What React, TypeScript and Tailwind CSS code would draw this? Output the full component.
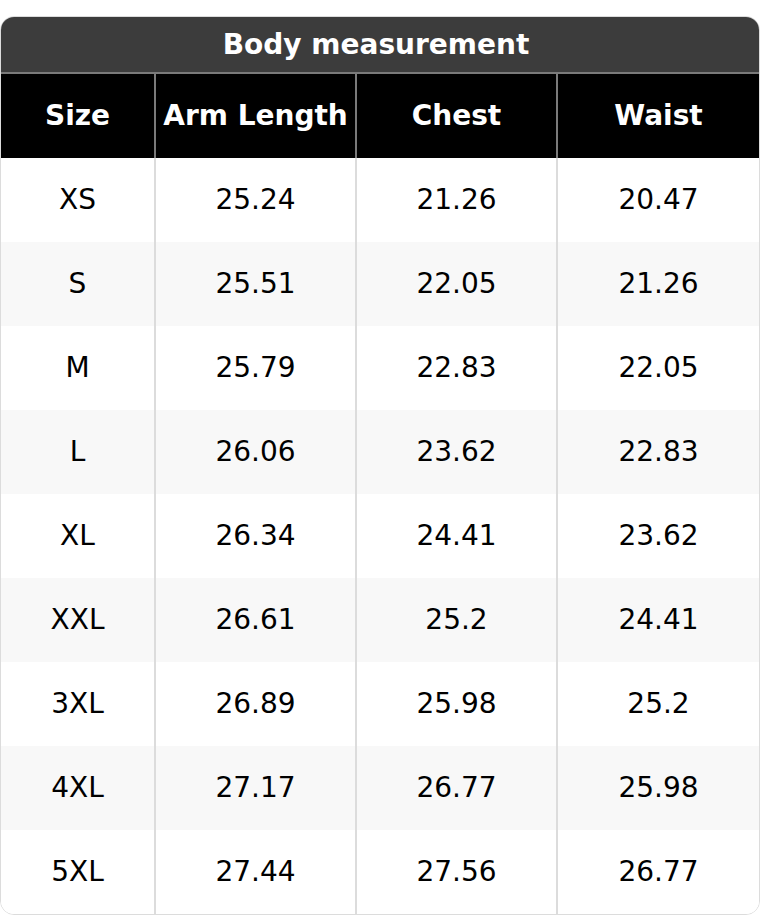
const HEADERS = ["Size", "Arm Length", "Chest", "Waist"];

const ROWS: string[][] = [
  ["XS", "25.24", "21.26", "20.47"],
  ["S", "25.51", "22.05", "21.26"],
  ["M", "25.79", "22.83", "22.05"],
  ["L", "26.06", "23.62", "22.83"],
  ["XL", "26.34", "24.41", "23.62"],
  ["XXL", "26.61", "25.2", "24.41"],
  ["3XL", "26.89", "25.98", "25.2"],
  ["4XL", "27.17", "26.77", "25.98"],
  ["5XL", "27.44", "27.56", "26.77"],
];

export default function App() {
  return (
    <div className="w-[760px] h-[916px] bg-white pt-4 font-['DejaVu_Sans',sans-serif] text-[28px]">
      <div className="rounded-[14px] overflow-hidden border border-[#dcdcdc]">
        <div className="h-[57px] bg-[#3c3c3c] border-b-2 border-[#7a7a7a] flex items-center justify-center pr-2 font-bold text-white">
          Body measurement
        </div>
        <div className="grid grid-cols-[155px_201px_201px_1fr] h-[84px] bg-black">
          {HEADERS.map((h, i) => (
            <div
              key={h}
              className={
                "flex items-center justify-center font-bold text-white " +
                (i < 3 ? "border-r-2 border-[#7a7a7a]" : "")
              }
            >
              {h}
            </div>
          ))}
        </div>
        {ROWS.map((row, r) => (
          <div
            key={row[0]}
            className={
              "grid grid-cols-[155px_201px_201px_1fr] h-[84px] " +
              (r % 2 === 1 ? "bg-[#f8f8f8]" : "bg-white")
            }
          >
            {row.map((cell, i) => (
              <div
                key={i}
                className={
                  "flex items-center justify-center text-black " +
                  (i < 3 ? "border-r-2 border-[#dcdcdc]" : "")
                }
              >
                {cell}
              </div>
            ))}
          </div>
        ))}
      </div>
    </div>
  );
}
